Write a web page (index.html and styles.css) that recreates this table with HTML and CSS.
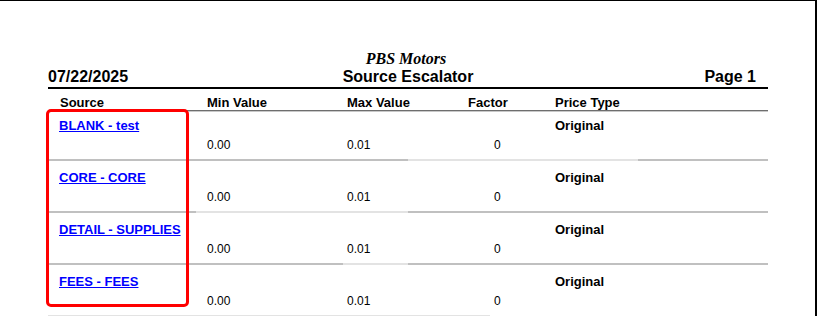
FILE: index.html
```html
<!DOCTYPE html>
<html>
<head>
<meta charset="utf-8">
<title>Source Escalator</title>
<link rel="stylesheet" href="styles.css">
</head>
<body>
<div class="page">
  <div class="report">
    <div class="title">
      <div class="date">07/22/2025</div>
      <div class="center">
        <div class="company">PBS Motors</div>
        <div class="name">Source Escalator</div>
      </div>
      <div class="pageno">Page 1</div>
    </div>
    <div class="grid head">
      <div class="c1">Source</div>
      <div>Min Value</div>
      <div>Max Value</div>
      <div>Factor</div>
      <div>Price Type</div>
    </div>

    <div class="row first">
      <div class="grid line1">
        <div class="c1"><a href="#">BLANK - test</a></div>
        <div></div><div></div><div></div>
        <div class="ptype">Original</div>
      </div>
      <div class="grid line2">
        <div class="c1"></div><div>0.00</div><div>0.01</div><div class="factor">0</div><div></div>
      </div>
    </div>
    <div class="sep sep1"></div>

    <div class="row">
      <div class="grid line1">
        <div class="c1"><a href="#">CORE - CORE</a></div>
        <div></div><div></div><div></div>
        <div class="ptype">Original</div>
      </div>
      <div class="grid line2">
        <div class="c1"></div><div>0.00</div><div>0.01</div><div class="factor">0</div><div></div>
      </div>
    </div>
    <div class="sep sep2"></div>

    <div class="row">
      <div class="grid line1">
        <div class="c1"><a href="#">DETAIL - SUPPLIES</a></div>
        <div></div><div></div><div></div>
        <div class="ptype">Original</div>
      </div>
      <div class="grid line2">
        <div class="c1"></div><div>0.00</div><div>0.01</div><div class="factor">0</div><div></div>
      </div>
    </div>
    <div class="sep sep3"></div>

    <div class="row">
      <div class="grid line1">
        <div class="c1"><a href="#">FEES - FEES</a></div>
        <div></div><div></div><div></div>
        <div class="ptype">Original</div>
      </div>
      <div class="grid line2">
        <div class="c1"></div><div>0.00</div><div>0.01</div><div class="factor">0</div><div></div>
      </div>
    </div>
    <div class="sep sep4"></div>
  </div>
  <div class="highlight"></div>
</div>
</body>
</html>
```
FILE: styles.css
```css
html, body {
  margin: 0;
  padding: 0;
  background: #fff;
  overflow: hidden;
}
body {
  font-family: "Liberation Sans", Arial, sans-serif;
  color: #000;
}
.page {
  position: relative;
  box-sizing: border-box;
  width: 817px;
  height: 316px;
  border-top: 1px solid #000;
  border-right: 2px solid #000;
  overflow: hidden;
}
.report {
  margin-left: 48px;
  width: 720px;
  padding-top: 49px;
}
.title {
  display: grid;
  grid-template-columns: 1fr auto 1fr;
  align-items: end;
  font-weight: bold;
  font-size: 16px;
  line-height: 18px;
  padding-bottom: 1px;
  border-bottom: 2px solid #000;
}
.center {
  text-align: center;
}
.company {
  font-family: "Liberation Serif", "Times New Roman", serif;
  font-style: italic;
  font-weight: bold;
  margin-right: 4px;
}
.pageno {
  text-align: right;
  padding-right: 12px;
}
.grid {
  display: grid;
  grid-template-columns: 159px 140px 121px 87px 1fr;
}
.c1 {
  padding-left: 11px;
}
.head {
  font-weight: bold;
  font-size: 13px;
  line-height: 15px;
  padding-top: 6px;
  border-bottom: 1px solid #6e6e6e;
  box-shadow: 0 1px 0 #c8c8c8;
}
.head .c1 {
  padding-left: 12px;
}
.row {
  padding-top: 9px;
  padding-bottom: 7px;
}
.row.first {
  padding-top: 7px;
}
.line1 {
  font-size: 13px;
  line-height: 15px;
  font-weight: bold;
}
.line1 a {
  color: #0000ff;
  text-decoration: underline;
}
.line2 {
  margin-top: 5px;
  font-size: 12px;
  line-height: 14px;
  color: #000;
}
.factor {
  padding-left: 26px;
}
.sep {
  height: 2px;
}
.sep1 {
  background: linear-gradient(to right, #c0c0c0 0, #c0c0c0 360px, #e3e3e3 360px, #e3e3e3 590px, #c0c0c0 590px, #c0c0c0 720px);
}
.sep2 {
  background: linear-gradient(to right, #c0c0c0 0, #c0c0c0 148px, #e3e3e3 148px, #e3e3e3 360px, #c0c0c0 360px, #c0c0c0 720px);
}
.sep3 {
  background: linear-gradient(to right, #c0c0c0 0, #c0c0c0 295px, #e3e3e3 295px, #e3e3e3 360px, #c0c0c0 360px, #c0c0c0 720px);
}
.sep4 {
  background: linear-gradient(to right, #e3e3e3 0, #e3e3e3 442px, transparent 442px);
}
.highlight {
  position: absolute;
  left: 46px;
  top: 108px;
  width: 143px;
  height: 198px;
  box-sizing: border-box;
  border: 3px solid #ff0000;
  border-radius: 5px;
}
```
